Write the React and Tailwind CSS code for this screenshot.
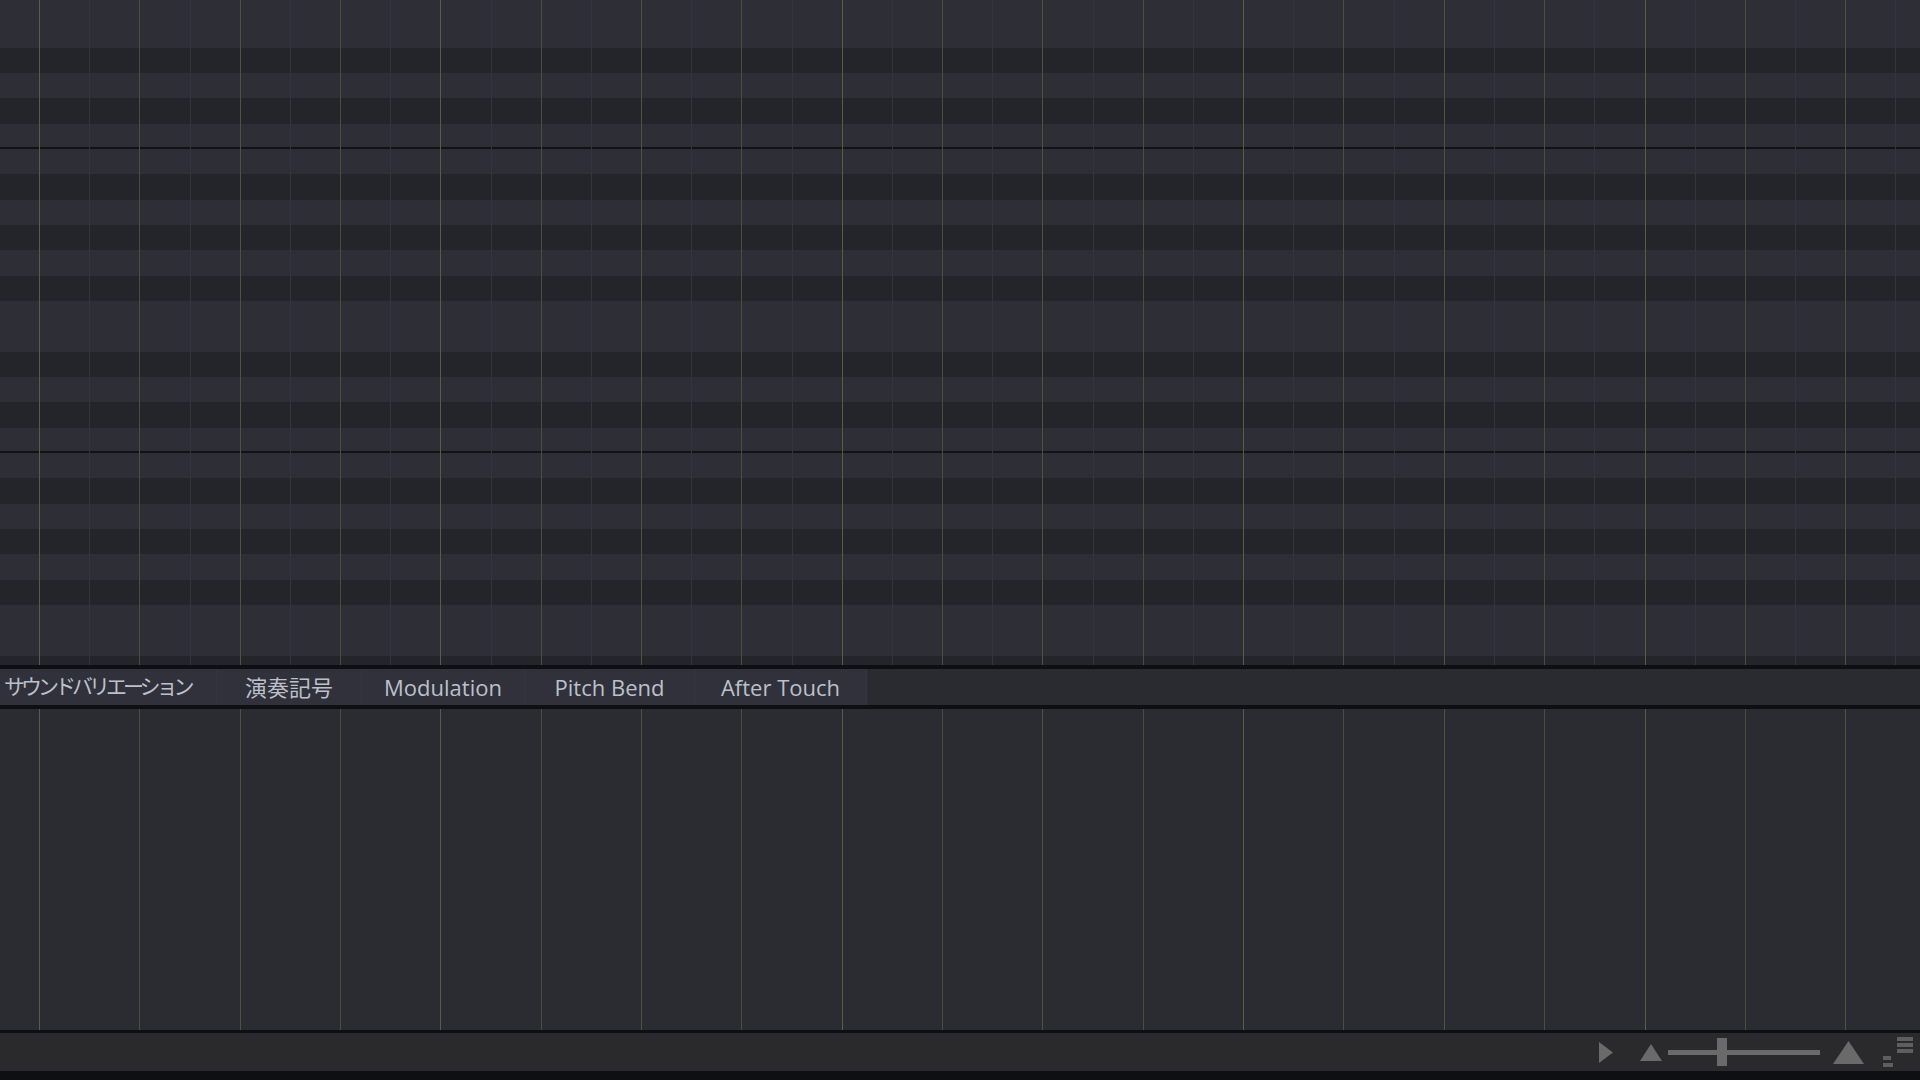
import { Fragment } from 'react'

// one octave, top (B) to bottom (C); dark = black key lane
const OCTAVE = [
  { n: 'B', dark: false },
  { n: 'A#', dark: true },
  { n: 'A', dark: false },
  { n: 'G#', dark: true },
  { n: 'G', dark: false },
  { n: 'F#', dark: true },
  { n: 'F', dark: false },
  { n: 'E', dark: false },
  { n: 'D#', dark: true },
  { n: 'D', dark: false },
  { n: 'C#', dark: true },
  { n: 'C', dark: false },
]

// first visible rows start at F, then whole octaves
const ROWS = [...OCTAVE.slice(6), ...OCTAVE, ...OCTAVE]

const BEATS = Array.from({ length: 19 }, (_, i) => i)

const TABS = [
  { label: 'サウンドバリエーション', w: 'w-[217px] pl-[4px] justify-start', kana: true },
  { label: '演奏記号', w: 'w-[145px] justify-center' },
  { label: 'Modulation', w: 'w-[163px] justify-center' },
  { label: 'Pitch Bend', w: 'w-[170px] justify-center' },
  { label: 'After Touch', w: 'w-[172px] justify-center' },
]

function NoteRows() {
  return (
    <div className="-mt-[3px] flex flex-col">
      {ROWS.map((row, i) => (
        <div
          key={i}
          className={`h-[25.33px] shrink-0 ${row.dark ? 'bg-[#24252b]' : 'bg-[#2d2e36]'} ${row.n === 'C' ? 'border-b-2 border-[#121216]' : ''}`}
        />
      ))}
    </div>
  )
}

function BeatLines({ halves }) {
  return (
    <div className="pointer-events-none absolute inset-0 flex pl-[39px]">
      {BEATS.map((b) => (
        <div key={b} className="flex h-full w-[100.35px] shrink-0">
          <div className={`h-full w-1/2 border-l ${b % 4 === 0 ? 'border-[#5e5c3e]' : b % 4 === 2 ? 'border-[#4a553e]' : 'border-[#4e4d3c]'}`} />
          <div className={`h-full w-1/2 ${halves ? 'border-l border-[#33343e]' : ''}`} />
        </div>
      ))}
    </div>
  )
}

function Tri({ w, h, dir = 'up' }) {
  const pts = dir === 'up' ? `0,${h} ${w / 2},0 ${w},${h}` : `0,0 ${w},${h / 2} 0,${h}`
  return (
    <svg width={w} height={h} viewBox={`0 0 ${w} ${h}`} className="block shrink-0">
      <polygon points={pts} fill="#6a6a6a" />
    </svg>
  )
}

export default function App() {
  return (
    <div className="flex h-[1080px] w-[1920px] flex-col overflow-hidden bg-[#0e0f12] font-['Open_Sans','Noto_Sans_CJK_JP',sans-serif]">
      {/* piano roll */}
      <div className="relative h-[665px] shrink-0 overflow-hidden">
        <NoteRows />
        <BeatLines halves />
      </div>
      <div className="h-[4px] shrink-0 bg-[#0e0f12]" />

      {/* controller tabs */}
      <div className="flex h-[36px] shrink-0 bg-[#2a2b31]">
        {TABS.map((t) => (
          <Fragment key={t.label}>
            <div className={`flex h-full items-center border-r border-[#34353f] bg-[#30313a] text-[22px] text-[#bcc0cb] ${t.w}`}>
              <span className={t.kana ? 'text-[21px] tracking-[-4px]' : ''}>{t.label}</span>
            </div>
          </Fragment>
        ))}
      </div>
      <div className="h-[4px] shrink-0 bg-[#0e0f12]" />

      {/* controller lane */}
      <div className="relative h-[321px] shrink-0 overflow-hidden bg-[#2b2c32]">
        <BeatLines />
      </div>
      <div className="h-[3px] shrink-0 bg-[#0e0f12]" />

      {/* zoom bar */}
      <div className="flex h-[38px] shrink-0 items-center justify-end bg-[#2a2a2d] pr-[7px]">
        <Tri w={14} h={21} dir="right" />
        <div className="w-[27px]" />
        <Tri w={22} h={17} />
        <div className="ml-[6px] flex items-center">
          <div className="h-[5px] w-[49px] bg-[#6a6a6a]" />
          <div className="h-[28px] w-[10px] bg-[#6a6a6a]" />
          <div className="h-[5px] w-[93px] bg-[#6a6a6a]" />
        </div>
        <div className="ml-[13px]">
          <Tri w={31} h={23} />
        </div>
        <div className="ml-[19px] flex flex-col gap-[3px] self-end pb-[4px]">
          <div className="h-[4px] w-[8px] bg-[#5e5e5e]" />
          <div className="h-[4px] w-[10px] bg-[#5e5e5e]" />
        </div>
        <div className="ml-[4px] flex flex-col gap-[2px] self-start pt-[4px]">
          <div className="h-[4px] w-[16px] bg-[#5e5e5e]" />
          <div className="h-[4px] w-[16px] bg-[#5e5e5e]" />
          <div className="h-[4px] w-[16px] bg-[#5e5e5e]" />
        </div>
      </div>
    </div>
  )
}
